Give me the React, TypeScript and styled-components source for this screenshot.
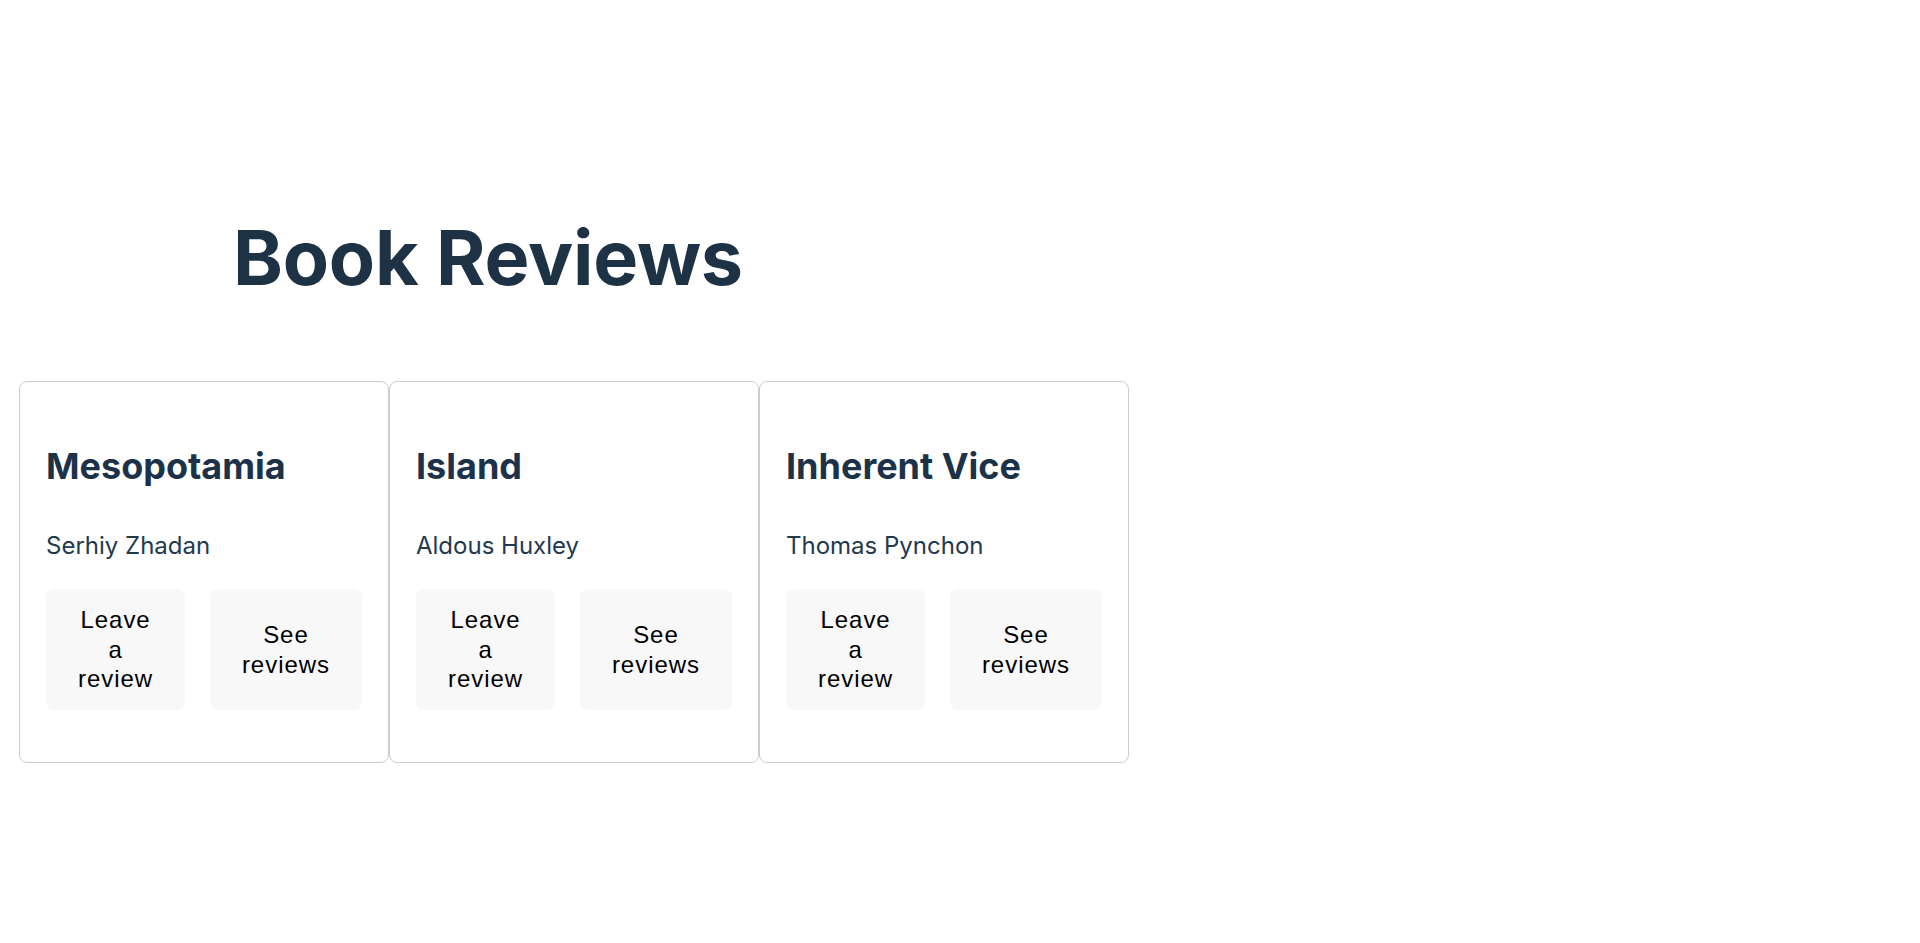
import styled, { createGlobalStyle } from 'styled-components'

const GlobalStyle = createGlobalStyle`
  html, body {
    margin: 0;
    padding: 0;
    background: #ffffff;
    font-family: Inter, "Liberation Sans", sans-serif;
  }
`

const Page = styled.main`
  min-height: 943px;
  padding-top: 212px;
  box-sizing: border-box;
`

const Title = styled.h1`
  margin: 0 0 77px 233px;
  font-size: 75.5px;
  font-weight: 700;
  line-height: 92px;
  letter-spacing: -0.003em;
  color: #1e3246;
`

const CardRow = styled.div`
  display: flex;
  padding-left: 19px;
`

const Card = styled.article`
  width: 370px;
  box-sizing: border-box;
  padding: 62px 26px 52px;
  border: 1px solid #cdcdcd;
  border-radius: 8px;
  background: #fff;
`

const BookTitle = styled.h2`
  margin: 0 0 43px;
  font-size: 36px;
  font-weight: 700;
  line-height: 45px;
  color: #1b3249;
`

const Author = styled.p`
  margin: 0 0 29px;
  font-size: 24px;
  font-weight: 400;
  line-height: 28px;
  color: #23394e;
`

const Actions = styled.div`
  display: flex;
  justify-content: space-between;
  gap: 20px;
`

const ActionButton = styled.button`
  width: min-content;
  min-height: 121px;
  padding: 0 32px;
  border: none;
  border-radius: 8px;
  background: #f8f8f8;
  color: #000;
  font-family: "Liberation Sans", Arial, sans-serif;
  font-size: 24px;
  letter-spacing: 0.04em;
  line-height: 29.5px;
  text-align: center;
  cursor: pointer;
`

const books = [
  { title: 'Mesopotamia', author: 'Serhiy Zhadan' },
  { title: 'Island', author: 'Aldous Huxley' },
  { title: 'Inherent Vice', author: 'Thomas Pynchon' }
]

const BookCard = ({ title, author }: { title: string; author: string }) => {
  return (
    <Card>
      <BookTitle>{title}</BookTitle>
      <Author>{author}</Author>
      <Actions>
        <ActionButton>Leave a review</ActionButton>
        <ActionButton>See reviews</ActionButton>
      </Actions>
    </Card>
  )
}

export default function App() {
  return (
    <>
      <GlobalStyle />
      <Page>
        <Title>Book Reviews</Title>
        <CardRow>
          {books.map(book => (
            <BookCard key={book.title} title={book.title} author={book.author} />
          ))}
        </CardRow>
      </Page>
    </>
  )
}
